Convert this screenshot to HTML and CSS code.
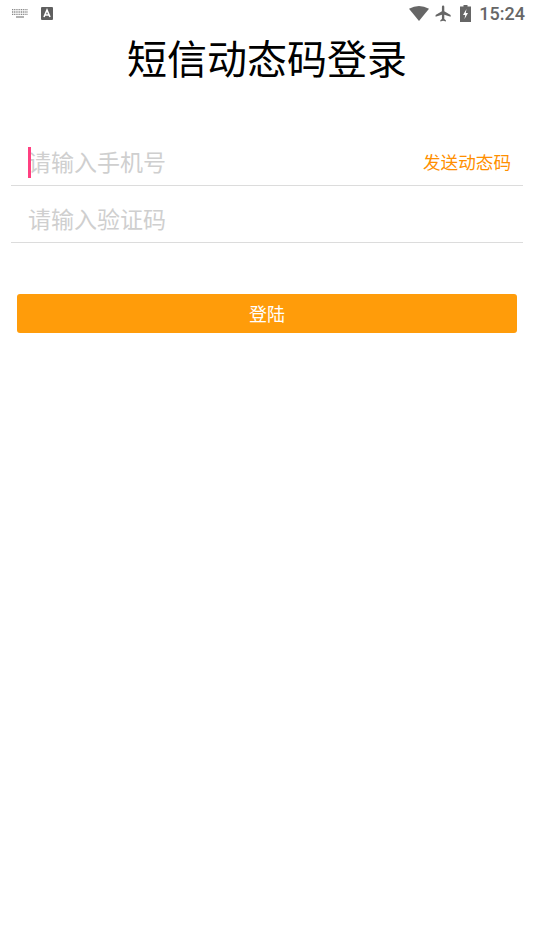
FILE: index.html
```html
<!DOCTYPE html>
<html lang="zh">
<head>
    <meta charset="utf-8">
    <meta name="viewport" content="width=device-width, initial-scale=1.0">
    <title>短信动态码登录</title>
    <link rel="stylesheet" href="styles.css">
</head>
<body>
    <div class="status-bar">
        <div class="status-left">
            <svg width="16" height="9" viewBox="0 0 16 9">
                <path stroke="#888" stroke-width="1.300" stroke-dasharray="1.100 .7" d="M0 .7h16M0 3h16M0 5.300h16"/>
                <path stroke="#888" stroke-width="1.300" d="M4 8h8"/>
            </svg>
            <svg width="12" height="13" viewBox="0 0 12 13">
                <rect width="12" height="13" rx="1" fill="#5f5f5f"/>
                <path fill="none" stroke="#fff" stroke-width="1.600" d="M3 10l3-7 3 7M4 8h4"/>
            </svg>
        </div>
        <div class="status-right">
            <svg width="20" height="15" viewBox="0 0 20 15"><path fill="#666" d="M0 2.700Q10-2.700 20 2.700L10 15z"/></svg>
            <svg class="icon-plane" width="19" height="19" viewBox="0 0 24 24"><path fill="#666" d="M21 16v-2l-8-5V3.500a1.500 1.500 0 0 0-3 0V9l-8 5v2l8-2.500V19l-2 1.500V22l3.500-1 3.500 1v-1.500L13 19v-5.500z"/></svg>
            <svg width="11" height="17" viewBox="0 0 11 17"><path fill="#666" d="M3.500 0h4v1.500H11V17H0V1.500h3.500z"/><path fill="#fff" d="M6.500 4L3 10h2.200l-.7 4L8 8H5.800z"/></svg>
            <span class="clock">15:24</span>
        </div>
    </div>

    <h1 class="title">短信动态码登录</h1>

    <div class="form">
        <div class="field">
            <span class="caret"></span>
            <span class="placeholder">请输入手机号</span>
            <span class="send-code">发送动态码</span>
        </div>
        <div class="field">
            <span class="placeholder">请输入验证码</span>
        </div>
    </div>

    <button class="login-button">登陆</button>
</body>
</html>
```

FILE: styles.css
```css
html, body {
    margin: 0;
    padding: 0;
}
body {
    width: 534px;
    height: 950px;
    background: #fff;
    font-family: Roboto, "Noto Sans CJK SC", sans-serif;
    overflow: hidden;
}
.status-bar {
    display: flex;
    justify-content: space-between;
    align-items: center;
    height: 27px;
    padding: 0 9px 0 12px;
}
.status-left {
    display: flex;
    align-items: center;
    gap: 13px;
}
.status-right {
    display: flex;
    align-items: center;
    gap: 6px;
}
.icon-plane {
    margin-left: -1px;
    margin-right: 1px;
}
.clock {
    font-size: 18px;
    font-weight: 500;
    color: #666;
    margin-left: 2px;
}
.title {
    margin: 9px 0 0;
    height: 50px;
    line-height: 50px;
    font-size: 40px;
    font-weight: 400;
    text-align: center;
    color: #000;
}
.form {
    margin: 43px 11px 0;
}
.field {
    display: flex;
    align-items: center;
    height: 48px;
    padding: 8px 0 0 17px;
    border-bottom: 1px solid #dcdcdc;
    position: relative;
}
.caret {
    position: absolute;
    left: 17px;
    top: 18px;
    width: 3px;
    height: 31px;
    background: #ff4081;
}
.placeholder {
    font-size: 23px;
    color: #cfcfcf;
}
.send-code {
    margin-left: auto;
    margin-right: 12px;
    font-size: 17.600px;
    color: #ff8f00;
}
.login-button {
    display: block;
    width: 500px;
    height: 39px;
    margin: 51px 17px 0;
    padding: 0 0 1px;
    border: none;
    border-radius: 3px;
    background: #ff9c0a;
    color: #fff;
    font-family: inherit;
    font-size: 18px;
}
```
